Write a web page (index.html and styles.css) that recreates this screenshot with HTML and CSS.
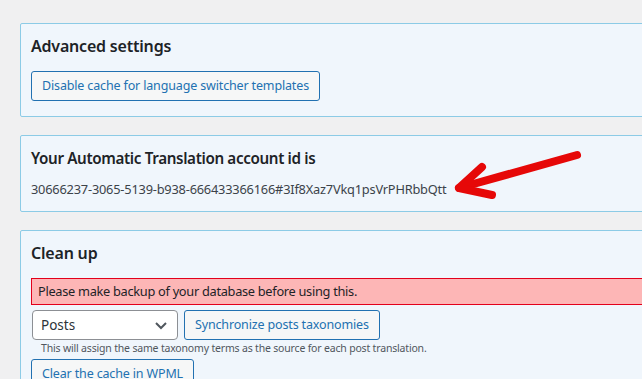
FILE: index.html
```html
<!DOCTYPE html>
<html>
<head>
<meta charset="utf-8">
<link rel="stylesheet" href="styles.css">
</head>
<body>
<div class="page">
  <section class="box">
    <h3 class="title">Advanced settings</h3>
    <button class="btn">Disable cache for language switcher templates</button>
  </section>

  <section class="box box-id">
    <h3 class="title">Your Automatic Translation account id is</h3>
    <p class="account-id">30666237-3065-5139-b938-666433366166#3If8Xaz7Vkq1psVrPHRbbQtt</p>
    <svg class="arrow" width="140" height="60" viewBox="0 0 140 60">
      <g fill="none" stroke="#e60808" stroke-width="8" stroke-linecap="round" stroke-linejoin="round">
        <path d="M128 10 L10 43"/>
        <path d="M33 22 L10 43 L43 50"/>
      </g>
    </svg>
  </section>

  <section class="box">
    <h3 class="title">Clean up</h3>
    <div class="notice">Please make backup of your database before using this.</div>
    <div class="row">
      <div class="select">
        <span>Posts</span>
        <svg width="16" height="16" viewBox="0 0 16 16"><path d="M3 6 L8 11 L13 6" fill="none" stroke="#50575e" stroke-width="2"/></svg>
      </div>
      <button class="btn">Synchronize posts taxonomies</button>
    </div>
    <p class="hint">This will assign the same taxonomy terms as the source for each post translation.</p>
    <button class="btn">Clear the cache in WPML</button>
  </section>
</div>
</body>
</html>
```

FILE: styles.css
```css
html, body {
  margin: 0;
  padding: 0;
  background: #f0f0f1;
  overflow: hidden;
  width: 642px;
  height: 379px;
}
body {
  font-family: "Noto Sans", "Open Sans", sans-serif;
  color: #1d2327;
}
.page {
  padding: 23px 0 0 20px;
  display: flex;
  flex-direction: column;
  gap: 18px;
  width: 700px;
}
.box {
  position: relative;
  background: #f0f6fc;
  border: 1px solid #8ccbe6;
  border-radius: 2px;
  padding: 10px 10px 15px 10px;
  display: flex;
  flex-direction: column;
  align-items: flex-start;
}
.title {
  margin: 0 0 13px 0;
  font-size: 16px;
  letter-spacing: -0.2px;
  line-height: 24px;
  font-weight: 600;
}
.btn {
  font-family: inherit;
  font-size: 12.5px;
  letter-spacing: -0.15px;
  line-height: 28px;
  height: 30px;
  padding: 0 10px;
  color: #2271b1;
  background: #f6f7f7;
  border: 1px solid #2271b1;
  border-radius: 3px;
}
.box-id {
  padding-bottom: 12px;
}
.box-id .title {
  margin-bottom: 9px;
  font-size: 15.2px;
  letter-spacing: -0.35px;
}
.account-id {
  margin: 0;
  font-size: 12.8px;
  letter-spacing: -0.2px;
  line-height: 20px;
  color: #3c434a;
}
.arrow {
  position: absolute;
  left: 428px;
  top: 9px;
}
.notice {
  align-self: stretch;
  box-sizing: border-box;
  height: 27px;
  line-height: 25px;
  padding: 0 6px;
  font-size: 12.8px;
  letter-spacing: -0.3px;
  background: #fdb6b6;
  border: 1px solid #e3001b;
  margin-bottom: 5px;
}
.row {
  display: flex;
  gap: 6px;
  margin-left: 1px;
}
.select {
  box-sizing: border-box;
  width: 146px;
  height: 30px;
  background: #fff;
  border: 1px solid #8c8f94;
  border-radius: 4px;
  display: flex;
  align-items: center;
  justify-content: space-between;
  padding: 0 8px;
  font-size: 13.5px;
  color: #2c3338;
}
.hint {
  margin: 1px 0 4px 10px;
  font-size: 10.5px;
  letter-spacing: -0.18px;
  line-height: 14px;
  color: #50575e;
}
```
